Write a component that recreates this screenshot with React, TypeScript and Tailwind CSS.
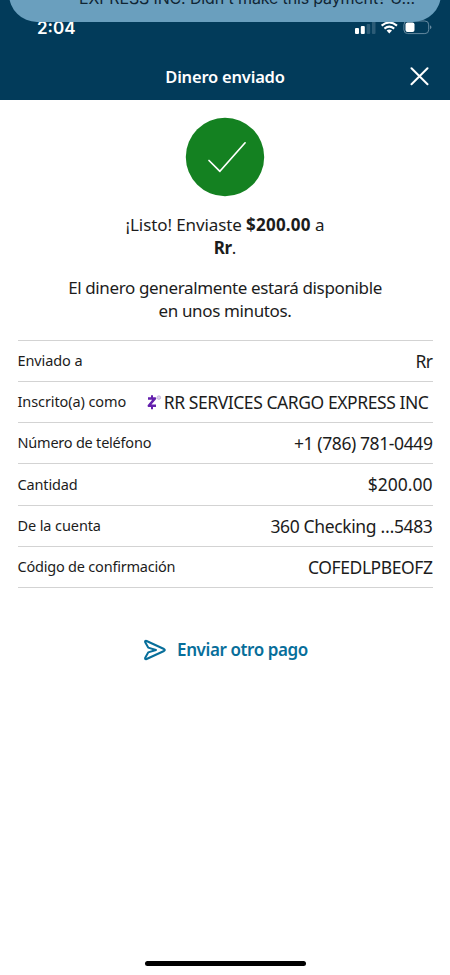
import type { ReactNode } from 'react';
import { clsx } from 'clsx';

interface Detail {
  label: string;
  labelClass: string;
  value: string;
  valueClass: string;
  icon?: ReactNode;
}

const details: Detail[] = [
  { label: 'Enviado a', labelClass: 'tracking-[-0.1px]', value: 'Rr', valueClass: 'tracking-[-0.6px]' },
  {
    label: 'Inscrito(a) como',
    labelClass: 'tracking-[-0.1px]',
    value: 'RR SERVICES CARGO EXPRESS INC',
    valueClass: 'tracking-[-0.43px] mr-1',
    icon: <ZelleMark />,
  },
  { label: 'Número de teléfono', labelClass: 'tracking-[-0.22px]', value: '+1 (786) 781-0449', valueClass: 'tracking-[-0.4px]' },
  { label: 'Cantidad', labelClass: 'tracking-[-0.15px]', value: '$200.00', valueClass: 'tracking-[0px]' },
  { label: 'De la cuenta', labelClass: 'tracking-[-0.1px]', value: '360 Checking …5483', valueClass: 'tracking-[-0.36px]' },
  { label: 'Código de confirmación', labelClass: 'tracking-[-0.21px]', value: 'COFEDLPBEOFZ', valueClass: 'tracking-[-0.43px]' },
];

export default function App() {
  return (
    <div className="relative flex h-[975px] w-[450px] flex-col overflow-hidden bg-white font-['Noto_Sans',sans-serif] text-[#1c1c1c]">
      <header className="h-[100px] shrink-0 bg-[#023b5a] text-white">
        <StatusBar />
        <div className="grid h-[54px] grid-cols-[1fr_auto_1fr] items-center">
          <h1 className="col-start-2 pt-[8px] text-[16.5px] font-semibold tracking-[-0.2px]">
            Dinero enviado
          </h1>
          <button className="mt-[6px] mr-[21px] justify-self-end" aria-label="Cerrar">
            <svg className="block size-[19px]" viewBox="0 0 19 19" fill="none" stroke="currentColor" strokeWidth="2" strokeLinecap="round">
              <path d="M1.5 1.2l16 16M17.5 1.2l-16 16" />
            </svg>
          </button>
        </div>
      </header>

      <main className="flex flex-col items-center">
        <svg className="mt-[17px] size-20" viewBox="0 0 80 80" fill="none">
          <circle cx="40" cy="40" r="39.2" fill="#148121" />
          <path d="M24 43.5L34.9 54.3L60.1 25.8" stroke="white" strokeWidth="1.7" strokeLinecap="round" strokeLinejoin="round" />
        </svg>

        <p className="mt-[17px] text-center text-[17px] leading-[22.5px] tracking-[-0.1px]">
          ¡Listo! Enviaste <b className="font-bold tracking-[0.2px]">$200.00</b> a
          <br />
          <b className="font-bold tracking-[-0.4px]">Rr</b>.
        </p>
        <p className="mt-[18px] text-center text-[17px] leading-[22.5px] tracking-[-0.37px]">
          El dinero generalmente estará disponible
          <br />
          en unos minutos.
        </p>

        <dl className="mt-[17.5px] w-[415px] border-t border-[#d3d3d3]">
          {details.map((detail) => (
            <DetailRow key={detail.label} {...detail} />
          ))}
        </dl>

        <button className="mt-[49px] ml-0.5 flex items-center gap-[10px] text-[#076e9a]">
          <svg className="h-[22px] w-[23px]" viewBox="0 0 23 22" fill="none" stroke="currentColor" strokeWidth="2" strokeLinecap="round" strokeLinejoin="round">
            <path d="M1.2 3.3Q0.7 1.4 2.6 2L20 10Q21.6 11 20 12L2.6 20Q0.7 20.6 1.2 18.7L4.2 13.4L12 11L4.2 8.6Z" />
          </svg>
          <span className="text-[17px] font-semibold tracking-[-0.4px]">Enviar otro pago</span>
        </button>
      </main>

      <div className="mx-auto mt-auto mb-[9px] h-[5px] w-[161px] rounded-full bg-black" />

      <div className="absolute -top-10 left-[9px] h-[62px] w-[432px] rounded-[28px] bg-[#6a9fbe]">
        <p className="absolute top-[28px] left-[70px] text-[16px] leading-[20px] tracking-[-0.15px] whitespace-nowrap text-[#102534] font-['Inter',sans-serif]">
          EXPRESS INC. Didn't make this payment? U...
        </p>
      </div>
    </div>
  );
}

function StatusBar() {
  return (
    <div className="flex h-[46px] items-start justify-between pt-[17px] pr-[17px] pl-[37px]">
      <span className="pt-px text-[17px] leading-[20px] font-semibold font-['Inter',sans-serif]">2:04</span>
      <svg className="h-[20px] w-[78px]" viewBox="0 0 78 20" fill="none">
        <rect x="0" y="11" width="4" height="6" rx="1" fill="white" />
        <rect x="5.8" y="9" width="4" height="8" rx="1" fill="white" />
        <rect x="11.6" y="7" width="3.6" height="10" rx="1" fill="#2c5c77" />
        <rect x="16.9" y="4" width="3.6" height="13" rx="1" fill="#2c5c77" />
        <path d="M26.6 8.6Q34.3 2.4 42 8.6M29.4 11.6Q34.3 7.8 39.2 11.6" stroke="white" strokeWidth="2.1" />
        <path d="M31.6 13.6Q34.3 11.4 37 13.6L34.3 16.6Z" fill="white" />
        <rect x="48.9" y="4" width="24.8" height="12.6" rx="3.8" stroke="#668aa0" />
        <rect x="50.5" y="5.6" width="9" height="9.4" rx="2" fill="white" />
        <path d="M75 8.3Q78 10.3 75 12.3Z" fill="#668aa0" />
      </svg>
    </div>
  );
}

function DetailRow({ label, labelClass, value, valueClass, icon }: Detail) {
  return (
    <div className="flex h-[41.3px] items-center justify-between border-b border-[#d3d3d3] whitespace-nowrap">
      <dt className={clsx('text-[14.5px]', labelClass)}>{label}</dt>
      <dd className={clsx('flex items-center gap-[2px] text-[17.5px]', valueClass)}>
        {icon}
        {value}
      </dd>
    </div>
  );
}

function ZelleMark() {
  return (
    <svg className="h-4 w-[15px]" viewBox="0 0 15 16" fill="none">
      <path d="M1 4.4H8L1.8 11.8H9" stroke="#6420ad" strokeWidth="2.5" strokeLinejoin="round" />
      <path d="M5 1.2V4M5 12V15.2" stroke="#6420ad" strokeWidth="2" />
      <circle cx="11.8" cy="3.6" r="1.8" fill="#ded2ec" stroke="#c3b1da" strokeWidth="0.9" />
    </svg>
  );
}
